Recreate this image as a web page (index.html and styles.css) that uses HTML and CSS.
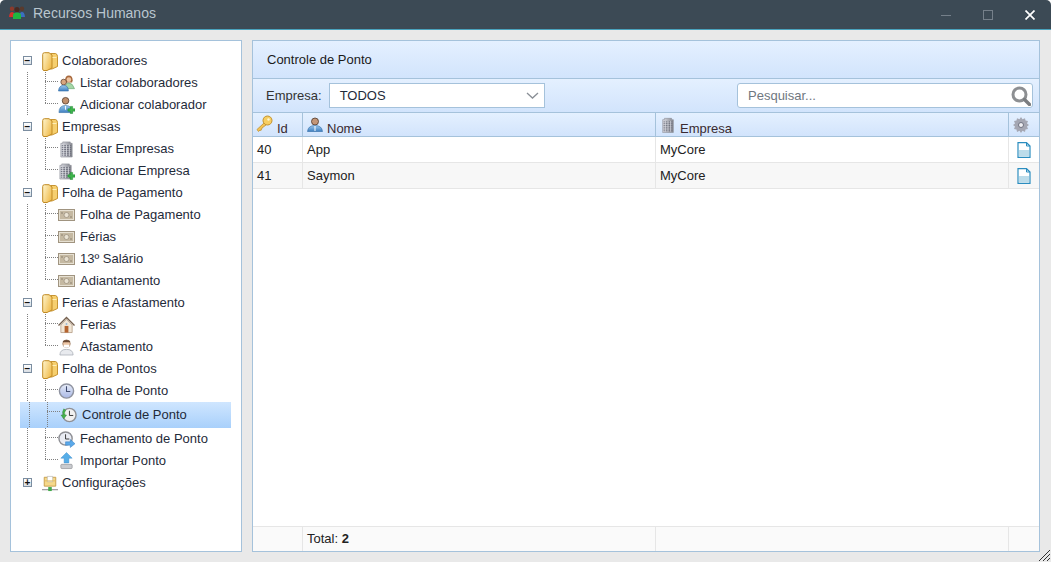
FILE: index.html
```html
<!DOCTYPE html>
<html lang="pt-BR">
<head>
    <meta charset="UTF-8">
    <title>Recursos Humanos</title>
    <link rel="stylesheet" href="styles.css">
</head>
<body>
    <svg class="defs" width="0" height="0">
        <defs>
            <linearGradient id="gFolder" x1="0" y1="0" x2="1" y2="0.600"><stop offset="0" stop-color="#fff6cf"/><stop offset="1" stop-color="#f0bd50"/></linearGradient>
            <linearGradient id="gBlue" x1="0" y1="0" x2="0" y2="1"><stop offset="0" stop-color="#9cc9ee"/><stop offset="1" stop-color="#3f7fc0"/></linearGradient>
            <linearGradient id="gGrey" x1="0" y1="0" x2="1" y2="0"><stop offset="0" stop-color="#dcdde4"/><stop offset="1" stop-color="#85878f"/></linearGradient>
            <linearGradient id="gClock" x1="0" y1="0" x2="0" y2="1"><stop offset="0" stop-color="#e8edf8"/><stop offset="1" stop-color="#a9b8e6"/></linearGradient>
            <symbol id="i-folder" viewBox="0 0 16 19">
                <path d="M6 3.500L9 1.500H13.500Q15.500 2 15.500 4.500V14.500L10 17H6Z" fill="#f6cf6e" stroke="#c08a24" stroke-width=".9"/>
                <path d="M.7 2.500Q.7 .7 2.500 .7H7L10 3V16L5 18.500H2Q.7 18.500 .7 17Z" fill="url(#gFolder)" stroke="#c08a24" stroke-width="1"/>
                <path d="M10.500 5H14.500V6H10.500Z" fill="#fdeeb8"/>
            </symbol>
            <symbol id="i-users" viewBox="0 0 18 18">
                <path d="M7.500 6Q7.500 1 11.500 1T15.500 6L15 8.500H8Z" fill="#a8683c"/>
                <circle cx="11.500" cy="5.500" r="2.500" fill="#eec3a0"/>
                <path d="M7 15Q7.500 9 11.500 9T17.500 15Z" fill="#a5d6a8" stroke="#5f9e67" stroke-width=".6"/>
                <circle cx="6" cy="8" r="3" fill="#d9a67f" stroke="#5d4130" stroke-width=".8"/>
                <path d="M.5 17.500Q1 11.500 6 11.500T11 17.500Z" fill="url(#gBlue)" stroke="#2e6aa5" stroke-width=".6"/>
            </symbol>
            <symbol id="i-user-add" viewBox="0 0 18 18">
                <circle cx="8" cy="4.500" r="3.500" fill="#c08f6c" stroke="#4e3627" stroke-width=".8"/>
                <path d="M1 17Q1 9.500 8 9.500T15 17Z" fill="url(#gBlue)" stroke="#2e6aa5" stroke-width=".6"/>
                <path d="M8 10V14" stroke="#fff"/>
                <path d="M13 10.500h2.500V13H18v2.500h-2.500V18H13v-2.500h-2.500V13H13Z" fill="#3db54a" stroke="#17802a" stroke-width=".5"/>
            </symbol>
            <symbol id="i-building" viewBox="0 0 18 18">
                <path d="M3 3H5V1.500H13V3H15V17.500H3Z" fill="url(#gGrey)" stroke="#85878f" stroke-width=".6"/>
                <path d="M4 5.500H14M4 7.500H14M4 9.500H14M4 11.500H14M4 13.500H14M4 15.500H14" stroke="#626472" stroke-width=".9"/>
                <path d="M6 4.500V16.500M9 4.500V16.500M12 4.500V16.500" stroke="#e3e4ea" stroke-width=".8"/>
            </symbol>
            <symbol id="i-building-add" viewBox="0 0 18 18">
                <path d="M2 3H4V1.500H12V3H14V17.500H2Z" fill="url(#gGrey)" stroke="#85878f" stroke-width=".6"/>
                <path d="M3 5.500H13M3 7.500H13M3 9.500H13M3 11.500H13M3 13.500H13M3 15.500H13" stroke="#626472" stroke-width=".9"/>
                <path d="M5 4.500V16.500M8 4.500V16.500M11 4.500V16.500" stroke="#e3e4ea" stroke-width=".8"/>
                <path d="M13 10.500h2.500V13H18v2.500h-2.500V18H13v-2.500h-2.500V13H13Z" fill="#3db54a" stroke="#17802a" stroke-width=".5"/>
            </symbol>
            <symbol id="i-money" viewBox="0 0 17 12">
                <rect x=".5" y=".5" width="16" height="11" fill="#e6e0d2" stroke="#a09480"/>
                <rect x="2" y="2" width="13" height="8" fill="#c5b9a2"/>
                <circle cx="8.500" cy="6" r="2.500" fill="#e9e2d2" stroke="#8d8270" stroke-width=".6"/>
                <path d="M3 4H5M12 8H14" stroke="#8d8270"/>
            </symbol>
            <symbol id="i-house" viewBox="0 0 18 18">
                <path d="M3 9V17H15V9L9 3Z" fill="#f1e6d6" stroke="#a58a70" stroke-width=".7"/>
                <path d="M.5 9.500L9 1L17.500 9.500" fill="none" stroke="#75604e" stroke-width="1.500"/>
                <rect x="7" y="10" width="4" height="7" fill="#b5642f"/>
                <circle cx="9" cy="8" r="1" fill="#9ab8d6"/>
            </symbol>
            <symbol id="i-person" viewBox="0 0 18 18">
                <circle cx="9" cy="5.500" r="4" fill="#eec7a6" stroke="#8a6a50" stroke-width=".7"/>
                <path d="M5 3Q9 0 13 3L12.500 4H5.500Z" fill="#6b4a35"/>
                <path d="M6 6.500H12V9Q9 10.500 6 9Z" fill="#fff"/>
                <path d="M2 17.500Q2 11.500 9 11.500T16 17.500Z" fill="#e8eaee" stroke="#9fa5ad" stroke-width=".7"/>
            </symbol>
            <symbol id="i-clock" viewBox="0 0 18 18">
                <circle cx="9" cy="9" r="7.500" fill="url(#gClock)" stroke="#8f93a0" stroke-width="1.500"/>
                <path d="M9 4V9.500H13" fill="none" stroke="#3e4a6d" stroke-width="1.100"/>
            </symbol>
            <symbol id="i-clock-back" viewBox="0 0 18 18">
                <circle cx="10" cy="9" r="7" fill="#f1f1f1" stroke="#8f9095" stroke-width="1.500"/>
                <path d="M10 4.500V9.500H14" fill="none" stroke="#333" stroke-width="1"/>
                <path d="M4 2.500A6.500 6.500 0 0 0 3.500 9H1L4 13L7 9H5.500A4.500 4.500 0 0 1 6 4Z" fill="#46b14c" stroke="#1f8030" stroke-width=".4"/>
            </symbol>
            <symbol id="i-clock-out" viewBox="0 0 18 18">
                <circle cx="8" cy="8.500" r="7" fill="#e9ecf3" stroke="#8f9095" stroke-width="1.500"/>
                <path d="M8 4V9H12" fill="none" stroke="#333" stroke-width="1"/>
                <path d="M8 12H13V9.500L18 14L13 18V15.500H8Z" fill="#5aa9ea" stroke="#2a75bc" stroke-width=".5"/>
            </symbol>
            <symbol id="i-import" viewBox="0 0 18 18">
                <path d="M9 0L15 6H11.500V11H6.500V6H3Z" fill="#57aee8" stroke="#3d8ccb" stroke-width=".5"/>
                <rect x="3" y="12.500" width="12" height="4.500" rx="1" fill="#c9cbcf" stroke="#8b8d92" stroke-width=".7"/>
            </symbol>
            <symbol id="i-network" viewBox="0 0 18 18">
                <path d="M2.500 2H15.500V12H2.500Z" fill="#f6d98a" stroke="#c39a45"/>
                <path d="M6 1H12V7H6Z" fill="#fff" stroke="#aaa" stroke-width=".6"/>
                <path d="M2.500 6H15.500" stroke="#e1b95d"/>
                <path d="M0 16H18" stroke="#777"/>
                <rect x="7" y="13" width="4" height="4.500" fill="#43aa4b"/>
            </symbol>
            <symbol id="i-key" viewBox="0 0 17 17">
                <circle cx="11.500" cy="5.500" r="4.500" fill="#f7ce62" stroke="#c2922f"/>
                <circle cx="12.500" cy="4.500" r="1.200" fill="#fff7cf"/>
                <path d="M8 8L1 14.500L2.500 16.500L4 15L5 15.500L6 13L10 10Z" fill="#f3c356" stroke="#c2922f" stroke-width=".8"/>
            </symbol>
            <symbol id="i-user" viewBox="0 0 16 16">
                <circle cx="8" cy="4.500" r="3.500" fill="#c49677" stroke="#4e3627" stroke-width=".8"/>
                <path d="M.5 14.500Q1 8.500 8 8.500T15.500 14.500Z" fill="url(#gBlue)" stroke="#2e6aa5" stroke-width=".6"/>
                <path d="M8 9V14" stroke="#fff"/>
            </symbol>
            <symbol id="i-gear" viewBox="0 0 16 16">
                <path d="M8 0L9.500 2.200L12 1.200L12.500 3.500L15 4L14 6.500L16 8L14 9.500L15 12L12.500 12.500L12 15L9.500 13.800L8 16L6.500 13.800L4 15L3.500 12.500L1 12L2 9.500L0 8L2 6.500L1 4L3.500 3.500L4 1.200L6.500 2.200Z" fill="#a5a7b3"/>
                <circle cx="8" cy="8" r="2.500" fill="#eeeef2" stroke="#6f7180"/>
            </symbol>
            <symbol id="i-doc" viewBox="0 0 14 16">
                <path d="M1 .7H9.500L13 4V15.300H1Z" fill="#fff" stroke="#2b8dbf" stroke-width="1.200"/>
                <path d="M9.500 .7V4H13" fill="none" stroke="#2b8dbf"/>
                <rect x="2" y="8" width="10" height="6.500" fill="#bcdcea"/>
            </symbol>
            <symbol id="i-search" viewBox="0 0 20 20">
                <circle cx="8.500" cy="8.500" r="6.500" fill="none" stroke="#8d8f92" stroke-width="3"/>
                <path d="M13.500 13.500L18.500 18.500" stroke="#7b7d80" stroke-width="3.400" stroke-linecap="round"/>
            </symbol>
            <symbol id="i-logo" viewBox="0 0 16 13">
                <path d="M0 11Q.5 6 3 6T6 11Z" fill="#d5312b"/>
                <path d="M10 11Q10.500 6 13 6T16 11Z" fill="#3a6fc0"/>
                <circle cx="3" cy="2.800" r="2.200" fill="#8c3a2c"/>
                <circle cx="13" cy="2.800" r="2.200" fill="#5a3a2c"/>
                <path d="M4 13V9Q4 6.500 8 6.500T12 9V13Z" fill="#1fb640"/>
                <circle cx="8" cy="3.500" r="2.600" fill="#4a2a22"/>
            </symbol>
        </defs>
    </svg>

    <div class="window">
        <header class="titlebar">
            <svg class="logo"><use href="#i-logo"/></svg>
            <span class="title">Recursos Humanos</span>
            <div class="win-btns">
                <svg width="10" height="10"><path d="M0 5.500H10" stroke="#75808a"/></svg>
                <svg width="10" height="10"><rect x=".5" y=".5" width="9" height="9" fill="none" stroke="#75808a"/></svg>
                <svg width="10" height="10"><path d="M.5 .5L9.500 9.500M9.500 .5L.5 9.500" stroke="#fff" stroke-width="1.700"/></svg>
            </div>
        </header>

        <main class="content">
            <nav class="tree-panel">
                <div class="node"><span class="toggle">−</span><svg class="ic-folder"><use href="#i-folder"/></svg><span class="label">Colaboradores</span></div>
                <div class="group">
                    <div class="leaf"><span class="guide"></span><span class="elbow"></span><svg class="ic"><use href="#i-users"/></svg><span class="label">Listar colaboradores</span></div>
                    <div class="leaf last"><span class="guide"></span><span class="elbow"></span><svg class="ic"><use href="#i-user-add"/></svg><span class="label">Adicionar colaborador</span></div>
                </div>

                <div class="node"><span class="toggle">−</span><svg class="ic-folder"><use href="#i-folder"/></svg><span class="label">Empresas</span></div>
                <div class="group">
                    <div class="leaf"><span class="guide"></span><span class="elbow"></span><svg class="ic"><use href="#i-building"/></svg><span class="label">Listar Empresas</span></div>
                    <div class="leaf last"><span class="guide"></span><span class="elbow"></span><svg class="ic"><use href="#i-building-add"/></svg><span class="label">Adicionar Empresa</span></div>
                </div>

                <div class="node"><span class="toggle">−</span><svg class="ic-folder"><use href="#i-folder"/></svg><span class="label">Folha de Pagamento</span></div>
                <div class="group">
                    <div class="leaf"><span class="guide"></span><span class="elbow"></span><svg class="ic"><use href="#i-money"/></svg><span class="label">Folha de Pagamento</span></div>
                    <div class="leaf"><span class="guide"></span><span class="elbow"></span><svg class="ic"><use href="#i-money"/></svg><span class="label">Férias</span></div>
                    <div class="leaf"><span class="guide"></span><span class="elbow"></span><svg class="ic"><use href="#i-money"/></svg><span class="label">13º Salário</span></div>
                    <div class="leaf last"><span class="guide"></span><span class="elbow"></span><svg class="ic"><use href="#i-money"/></svg><span class="label">Adiantamento</span></div>
                </div>

                <div class="node"><span class="toggle">−</span><svg class="ic-folder"><use href="#i-folder"/></svg><span class="label">Ferias e Afastamento</span></div>
                <div class="group">
                    <div class="leaf"><span class="guide"></span><span class="elbow"></span><svg class="ic"><use href="#i-house"/></svg><span class="label">Ferias</span></div>
                    <div class="leaf last"><span class="guide"></span><span class="elbow"></span><svg class="ic"><use href="#i-person"/></svg><span class="label">Afastamento</span></div>
                </div>

                <div class="node"><span class="toggle">−</span><svg class="ic-folder"><use href="#i-folder"/></svg><span class="label">Folha de Pontos</span></div>
                <div class="group">
                    <div class="leaf"><span class="guide"></span><span class="elbow"></span><svg class="ic"><use href="#i-clock"/></svg><span class="label">Folha de Ponto</span></div>
                    <div class="leaf selected"><span class="guide"></span><span class="elbow"></span><svg class="ic"><use href="#i-clock-back"/></svg><span class="label">Controle de Ponto</span></div>
                    <div class="leaf"><span class="guide"></span><span class="elbow"></span><svg class="ic"><use href="#i-clock-out"/></svg><span class="label">Fechamento de Ponto</span></div>
                    <div class="leaf last"><span class="guide"></span><span class="elbow"></span><svg class="ic"><use href="#i-import"/></svg><span class="label">Importar Ponto</span></div>
                </div>

                <div class="node"><span class="toggle">+</span><svg class="ic-folder"><use href="#i-network"/></svg><span class="label">Configurações</span></div>
            </nav>

            <section class="grid-panel">
                <div class="panel-title">Controle de Ponto</div>
                <div class="toolbar">
                    <label class="field-label">Empresa:</label>
                    <div class="select">
                        <span>TODOS</span>
                        <svg width="13" height="7"><path d="M1 1L6.500 6L12 1" fill="none" stroke="#8a8f96" stroke-width="1.300"/></svg>
                    </div>
                    <div class="search">
                        <span>Pesquisar...</span>
                        <svg class="search-ic"><use href="#i-search"/></svg>
                    </div>
                </div>

                <div class="row head">
                    <div class="cell"><svg class="ic-key"><use href="#i-key"/></svg>Id</div>
                    <div class="cell"><svg class="ic-head"><use href="#i-user"/></svg>Nome</div>
                    <div class="cell"><svg class="ic-head"><use href="#i-building"/></svg>Empresa</div>
                    <div class="cell center"><svg class="ic-gear"><use href="#i-gear"/></svg></div>
                </div>

                <div class="rows">
                    <div class="row item">
                        <div class="cell">40</div>
                        <div class="cell">App</div>
                        <div class="cell">MyCore</div>
                        <div class="cell center"><svg class="ic-doc"><use href="#i-doc"/></svg></div>
                    </div>
                    <div class="row item alt">
                        <div class="cell">41</div>
                        <div class="cell">Saymon</div>
                        <div class="cell">MyCore</div>
                        <div class="cell center"><svg class="ic-doc"><use href="#i-doc"/></svg></div>
                    </div>
                </div>

                <div class="row foot">
                    <div class="cell"></div>
                    <div class="cell">Total:&nbsp;<b>2</b></div>
                    <div class="cell"></div>
                    <div class="cell"></div>
                </div>
            </section>
        </main>
        <svg class="grip" width="13" height="13"><path d="M12 1L1 12M12 5L5 12M12 9L9 12" stroke="#333"/></svg>
    </div>
</body>
</html>
```

FILE: styles.css
```css
* {
    box-sizing: border-box;
}

html, body {
    margin: 0;
    height: 100%;
    overflow: hidden;
    background: #fff;
}

body {
    font-family: "Liberation Sans", Arial, sans-serif;
    font-size: 13px;
    color: #222;
}

.defs {
    position: absolute;
}

.window {
    position: relative;
    height: 562px;
    display: flex;
    flex-direction: column;
    background: #e9e9e9;
    border-radius: 5px 5px 0 0;
    overflow: hidden;
}

/* title bar */
.titlebar {
    height: 30px;
    flex: none;
    display: flex;
    align-items: center;
    background: #3c4a55;
    border-bottom: 1px solid #4aa3bd;
    padding-left: 9px;
    padding-bottom: 1px;
}

.logo {
    width: 16px;
    height: 13px;
    margin-right: 8px;
    margin-top: -3px;
}

.title {
    color: #b9c6cf;
    font-size: 14px;
    margin-top: -3px;
}

.win-btns {
    margin-left: auto;
    display: flex;
    padding-right: 16px;
    gap: 32px;
    margin-top: 2px;
}

/* main area */
.content {
    flex: 1;
    display: flex;
    gap: 10px;
    padding: 10px 11px 10px 10px;
    min-height: 0;
}

.tree-panel {
    width: 232px;
    flex: none;
    background: #fff;
    border: 1px solid #a5c2db;
    padding: 9px 9px 0;
}

.node {
    display: flex;
    align-items: center;
    height: 22px;
    color: #1f2b3a;
}

.label {
    margin-bottom: 2px;
}

.toggle {
    width: 9px;
    height: 9px;
    margin: -2px 10px 0 3px;
    flex: none;
    border: 1px solid #7b8da0;
    background: linear-gradient(#fff, #d8dde3);
    font-size: 10px;
    line-height: 7px;
    text-align: center;
    font-weight: bold;
    color: #111;
}

.ic-folder {
    width: 16px;
    height: 19px;
    margin-right: 4px;
    flex: none;
}

.group {
    display: flex;
    flex-direction: column;
}

.leaf {
    display: flex;
    align-items: center;
    height: 22px;
    color: #1f2b3a;
}

/* dotted tree lines, drawn as backgrounds so the dots stay on the pixel grid */
.guide {
    align-self: stretch;
    width: 18px;
    margin-left: 7px;
    flex: none;
    background: repeating-linear-gradient(#808080 0 1px, transparent 1px 2px) 0 0 / 1px 100% no-repeat;
}

.elbow {
    align-self: stretch;
    width: 13px;
    flex: none;
    background:
        repeating-linear-gradient(90deg, #808080 0 1px, transparent 1px 2px) 0 9px / 100% 1px no-repeat,
        repeating-linear-gradient(#808080 0 1px, transparent 1px 2px) 0 0 / 1px 100% no-repeat;
}

.leaf.last .elbow {
    background-size: 100% 1px, 1px 9px;
}

.ic {
    width: 17px;
    height: 18px;
    margin-right: 5px;
    flex: none;
}

.leaf.selected {
    height: 26px;
    background: linear-gradient(#cfe6ff, #a8d0fb);
    margin-right: 1px;
    padding-left: 2px;
}

.grid-panel {
    flex: 1;
    min-width: 0;
    display: flex;
    flex-direction: column;
    background: #fff;
    border: 1px solid #a5c2db;
}

.panel-title {
    height: 38px;
    flex: none;
    display: flex;
    align-items: center;
    padding-left: 14px;
    background: linear-gradient(#e4f0ff, #d2e4fc);
    border-bottom: 1px solid #a5c2db;
    color: #1a1a1a;
}

.toolbar {
    height: 34px;
    flex: none;
    display: flex;
    align-items: center;
    padding: 0 6px 0 13px;
    background: linear-gradient(#e4f0ff, #d2e4fc);
    border-bottom: 1px solid #a5c2db;
}

.field-label {
    margin-right: 7px;
    color: #333;
}

.select {
    width: 216px;
    height: 25px;
    display: flex;
    align-items: center;
    justify-content: space-between;
    padding: 0 5px 0 10px;
    background: #fff;
    border: 1px solid #a5c2db;
    color: #1f2b3a;
}

.search {
    margin-left: auto;
    width: 296px;
    height: 25px;
    display: flex;
    align-items: center;
    padding: 0 1px 0 10px;
    background: #fff;
    border: 1px solid #a5c2db;
    border-radius: 3px;
    color: #6f7780;
}

.search-ic {
    margin-left: auto;
    width: 20px;
    height: 20px;
}

/* grid */
.row {
    display: grid;
    grid-template-columns: 50px 353px 353px 1fr;
    flex: none;
}

.cell {
    display: flex;
    align-items: center;
    padding-left: 4px;
    border-right: 1px solid #e6e6e6;
    white-space: nowrap;
}

.cell:last-child {
    border-right: 0;
}

.cell.center {
    justify-content: center;
    padding-left: 0;
}

.head {
    height: 24px;
    background: linear-gradient(#e4f0ff, #d2e4fc);
    border-bottom: 1px solid #a5c2db;
    color: #3a2a30;
}

.head .cell {
    border-right-color: #a5c2db;
    padding-left: 4px;
    padding-top: 7px;
}

.head .cell.center {
    padding-top: 0;
    padding-left: 0;
}

.ic-key {
    width: 17px;
    height: 17px;
    margin: -9px 4px 0 -1px;
}

.ic-head {
    width: 16px;
    height: 16px;
    margin: -7px 4px 0 0;
}

.ic-gear {
    width: 16px;
    height: 16px;
    margin-right: 6px;
}

.rows {
    flex: 1;
}

.item {
    height: 26px;
    border-bottom: 1px solid #e6e6e6;
    color: #222;
}

.item.alt {
    background: #f7f7f7;
}

.ic-doc {
    width: 14px;
    height: 16px;
}

.foot {
    height: 25px;
    background: #fafafa;
    border-top: 1px solid #e6e6e6;
}

.foot .cell {
    padding-bottom: 2px;
}

.grip {
    position: absolute;
    right: 0;
    bottom: 0;
}
```
